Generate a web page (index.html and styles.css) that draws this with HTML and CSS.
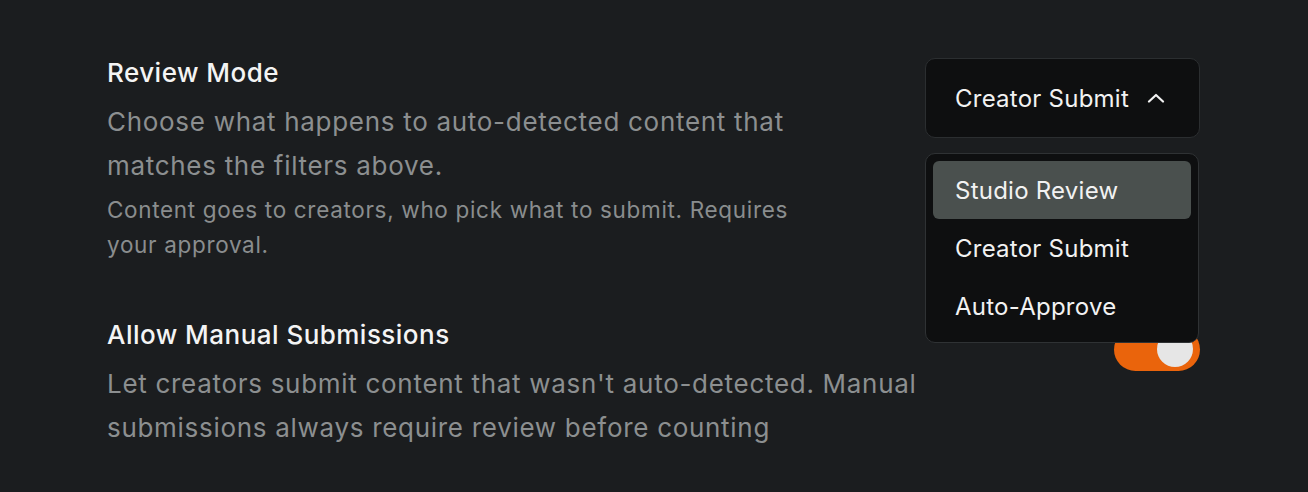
FILE: index.html
```html
<!DOCTYPE html>
<html lang="en">
<head>
<meta charset="utf-8">
<title>Review settings</title>
<link rel="stylesheet" href="styles.css">
</head>
<body>
<main class="page">
  <section class="setting setting-review">
    <div class="setting-text">
      <h3 class="setting-title">Review Mode</h3>
      <p class="setting-desc">Choose what happens to auto-detected content that matches the filters above.</p>
      <p class="setting-note">Content goes to creators, who pick what to submit. Requires your approval.</p>
    </div>
    <div class="select">
      <button class="select-button" type="button">
        <span class="select-value">Creator Submit</span>
        <svg class="chevron" width="18" height="10" viewBox="0 0 18 10" fill="none"><path d="M2 8.5 L9 2 L16 8.5" stroke="#f2f2f2" stroke-width="2.2" stroke-linecap="round" stroke-linejoin="round"/></svg>
      </button>
      <ul class="select-menu">
        <li class="select-option is-active">Studio Review</li>
        <li class="select-option">Creator Submit</li>
        <li class="select-option">Auto-Approve</li>
      </ul>
    </div>
  </section>
  <section class="setting setting-manual">
    <div class="setting-text">
      <h3 class="setting-title">Allow Manual Submissions</h3>
      <p class="setting-desc">Let creators submit content that wasn't auto-detected. Manual submissions always require review before counting</p>
    </div>
    <div class="toggle is-on"><span class="toggle-knob"></span></div>
  </section>
</main>
</body>
</html>
```

FILE: styles.css
```css
* { box-sizing: border-box; }
html, body { margin: 0; padding: 0; }
body {
  background: #1b1d1f;
  font-family: "Inter", "Open Sans", sans-serif;
  color: #f2f2f2;
  width: 1308px;
  height: 492px;
  overflow: hidden;
}
.page {
  padding: 58px 108px 0 107px;
  display: flex;
  flex-direction: column;
  gap: 58px;
}
.setting {
  display: flex;
  justify-content: space-between;
  align-items: flex-start;
  gap: 100px;
}
.setting-text {
  flex: 1;
  min-width: 0;
}
.setting-title {
  margin: 0 0 12px;
  font-size: 26px;
  font-weight: 500;
  line-height: 30px;
  letter-spacing: 0.018em;
  color: #f4f4f4;
}
.setting-desc {
  margin: 0;
  font-size: 26px;
  line-height: 44px;
  letter-spacing: 0.027em;
  color: #8c8f90;
}
.setting-note {
  margin: 4px 0 0;
  font-size: 22.5px;
  line-height: 35px;
  letter-spacing: 0.03em;
  color: #8a8d8e;
}
.select {
  position: relative;
  width: 275px;
  flex: none;
}
.select-button {
  width: 275px;
  height: 80px;
  display: flex;
  align-items: center;
  justify-content: space-between;
  padding: 0 34px 0 29px;
  background: #0e0f10;
  border: 1px solid #2b2e30;
  border-radius: 10px;
  color: #f2f2f2;
  font-family: inherit;
  font-size: 24px;
  letter-spacing: 0.01em;
  cursor: pointer;
}
.chevron { display: block; }
.select-menu {
  position: absolute;
  top: 95px;
  left: 0;
  width: 274px;
  margin: 0;
  padding: 7px;
  list-style: none;
  background: #0e0f10;
  border: 1px solid #2f3234;
  border-radius: 10px;
  z-index: 2;
}
.select-option {
  height: 58px;
  display: flex;
  align-items: center;
  padding-left: 22px;
  font-size: 24px;
  letter-spacing: 0.01em;
  color: #f2f2f2;
  border-radius: 6px;
}
.select-option.is-active { background: #4a504e; }
.setting-manual .toggle { margin-top: 8px; }
.toggle {
  position: relative;
  flex: none;
  width: 86px;
  height: 43px;
  border-radius: 22px;
  background: #ea640c;
}
.toggle-knob {
  position: absolute;
  top: 3px;
  right: 7px;
  width: 36px;
  height: 36px;
  border-radius: 50%;
  background: #e6e6e6;
}
```
